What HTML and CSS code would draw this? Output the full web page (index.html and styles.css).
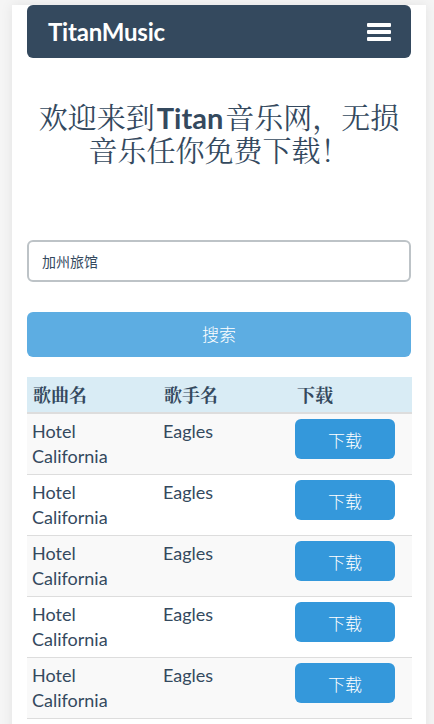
FILE: index.html
```html
<!DOCTYPE html>
<html lang="zh-CN">
<head>
<meta charset="utf-8">
<title>TitanMusic</title>
<link rel="stylesheet" href="styles.css">
</head>
<body>
<div class="page">
  <nav class="navbar">
    <span class="brand">TitanMusic</span>
    <span class="toggle"><i></i><i></i><i></i></span>
  </nav>
  <h1 class="hero">欢迎来到<b>Titan</b>音乐网，无损音乐任你免费下载！</h1>
  <div class="search-input">加州旅馆</div>
  <button class="search-btn">搜索</button>
  <table class="songs">
    <thead>
      <tr><th class="c1">歌曲名</th><th class="c2">歌手名</th><th class="c3">下载</th></tr>
    </thead>
    <tbody>
      <tr><td>Hotel California</td><td>Eagles</td><td><button class="dl">下载</button></td></tr>
      <tr><td>Hotel California</td><td>Eagles</td><td><button class="dl">下载</button></td></tr>
      <tr><td>Hotel California</td><td>Eagles</td><td><button class="dl">下载</button></td></tr>
      <tr><td>Hotel California</td><td>Eagles</td><td><button class="dl">下载</button></td></tr>
      <tr><td>Hotel California</td><td>Eagles</td><td><button class="dl">下载</button></td></tr>
    </tbody>
  </table>
</div>
</body>
</html>
```
FILE: styles.css
```css
html, body {
  margin: 0;
  padding: 0;
}
body {
  background: #f5f5f5;
  font-family: Lato, "Noto Sans CJK SC", sans-serif;
  color: #34495e;
  padding-top: 5px;
}
.page {
  margin: 0 12px 0 12px;
  width: 384px;
  padding: 0 15px;
  background: #fff;
  box-shadow: 0 0 12px rgba(0,0,0,0.08);
  min-height: 740px;
}
.navbar {
  height: 53px;
  background: #34495e;
  border-radius: 6px;
  display: flex;
  align-items: center;
  justify-content: space-between;
  padding: 0 20px 0 21px;
}
.brand {
  color: #fff;
  font-family: Lato, sans-serif;
  font-weight: 700;
  font-size: 24px;
  letter-spacing: -0.2px;
}
.toggle {
  display: flex;
  flex-direction: column;
  gap: 3px;
  width: 24px;
}
.toggle i {
  display: block;
  height: 4px;
  background: #fff;
  border-radius: 1px;
}
.hero {
  margin: 43px 0 74px;
  text-align: center;
  font-family: "Noto Serif CJK SC", "Noto Sans CJK SC", serif;
  font-weight: 400;
  font-size: 29px;
  line-height: 32px;
  color: #34495e;
  padding: 0 6px;
}
.hero b {
  font-family: Lato, sans-serif;
  font-weight: 700;
  margin: 0 2px;
}
.search-input {
  box-sizing: border-box;
  height: 42px;
  border: 2px solid #bdc3c7;
  border-radius: 6px;
  padding: 0 13px;
  display: flex;
  align-items: center;
  font-family: "Noto Sans CJK SC", sans-serif;
  font-size: 14px;
  color: #34495e;
}
.search-btn {
  display: block;
  width: 100%;
  height: 45px;
  margin: 30px 0 20px;
  border: 0;
  border-radius: 6px;
  background: #5dade2;
  color: #fff;
  font-family: "Noto Sans CJK SC", sans-serif;
  font-size: 17px;
  font-weight: 300;
  padding: 0 0 3px;
}
.songs {
  width: 100%;
  border-collapse: collapse;
  border-spacing: 0;
  table-layout: fixed;
}
.songs th {
  background: #d9ecf5;
  text-align: left;
  padding: 5px 5px 5px 6px;
  line-height: 25px;
  font-family: "Noto Serif CJK SC", "Noto Sans CJK SC", serif;
  font-weight: 700;
  font-size: 18px;
  border-bottom: 2px solid #dddddd;
  color: #34495e;
}
.songs th.c3 { padding-left: 7px; }
.songs .c1 { width: 120px; }
.songs .c2 { width: 121px; }
.songs .c3 { width: 110px; }
.songs td {
  padding: 5px;
  line-height: 25px;
  font-size: 18px;
  vertical-align: top;
  border-bottom: 1px solid #dddddd;
}
.songs tbody tr:nth-child(odd) td {
  background: #f9f9f9;
}
.dl {
  width: 100px;
  height: 40px;
  border: 0;
  border-radius: 6px;
  background: #3498db;
  color: #fff;
  font-family: "Noto Sans CJK SC", sans-serif;
  font-size: 17px;
  font-weight: 300;
  padding: 0;
  display: block;
}
```
